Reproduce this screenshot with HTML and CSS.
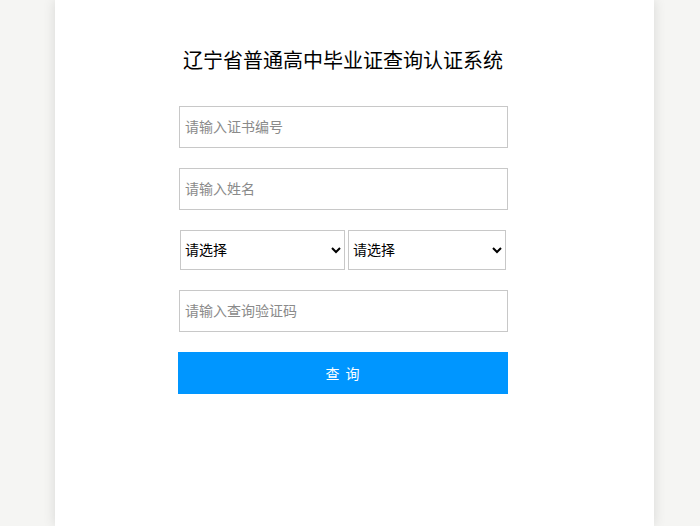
FILE: index.html
```html
<!DOCTYPE html>
<html lang="zh-CN">
<head>
  <meta charset="UTF-8">
  <meta name="viewport" content="width=device-width, initial-scale=1.0">
  <title>辽宁省普通高中毕业证查询认证系统</title>
  <link rel="stylesheet" href="styles.css">
</head>
<body>
  <div class="main">
    <div class="box">
      <h1 class="title">辽宁省普通高中毕业证查询认证系统</h1>

      <form class="query-form">
        <input type="text" class="field" placeholder="请输入证书编号">
        <input type="text" class="field" placeholder="请输入姓名">

        <div class="selects">
          <select class="sel sel-left">
            <option>请选择</option>
          </select>
          <select class="sel sel-right">
            <option>请选择</option>
          </select>
        </div>

        <input type="text" class="field" placeholder="请输入查询验证码">

        <button type="button" class="btn-query">查 询</button>
      </form>
    </div>
  </div>
</body>
</html>
```

FILE: styles.css
```css
html, body {
  margin: 0;
  height: 100%;
}

body {
  background-color: #f5f5f3;
  font-family: "Liberation Sans", "Noto Sans CJK SC", sans-serif;
}

.main {
  margin-left: 55px;
  width: 599px;
  min-height: 100%;
  background-color: #fff;
  box-shadow: 0 0 12px rgba(0, 0, 0, 0.12);
}

.box {
  width: 330px;
  padding-left: 123px;
  padding-top: 46px;
}

.title {
  margin: 0 0 30px 0;
  font-size: 20px;
  font-weight: normal;
  line-height: 30px;
  color: #000;
  text-align: center;
  white-space: nowrap;
}

.query-form {
  display: flex;
  flex-direction: column;
}

.field {
  box-sizing: border-box;
  width: 329px;
  height: 42px;
  margin: 0 0 20px 1px;
  padding: 0 5px;
  border: 1px solid #c8c8c8;
  font-family: "Liberation Sans", "Noto Sans CJK SC", sans-serif;
  font-size: 14px;
  color: #333;
  outline: none;
}

.field::placeholder {
  color: #8a8a8a;
}

.selects {
  display: flex;
  gap: 3px;
  margin: 0 0 20px 2px;
}

.sel {
  box-sizing: border-box;
  height: 40px;
  padding: 0;
  border: 1px solid #c8c8c8;
  border-radius: 0;
  background-color: #fff;
  font-family: "Liberation Sans", "Noto Sans CJK SC", sans-serif;
  font-size: 14px;
  color: #000;
}

.sel-left {
  width: 165px;
}

.sel-right {
  width: 158px;
}

.btn-query {
  width: 330px;
  height: 42px;
  border: none;
  background-color: #0096ff;
  color: #fff;
  font-family: "Liberation Sans", "Noto Sans CJK SC", sans-serif;
  font-size: 14px;
  letter-spacing: 1px;
  cursor: pointer;
}
```
